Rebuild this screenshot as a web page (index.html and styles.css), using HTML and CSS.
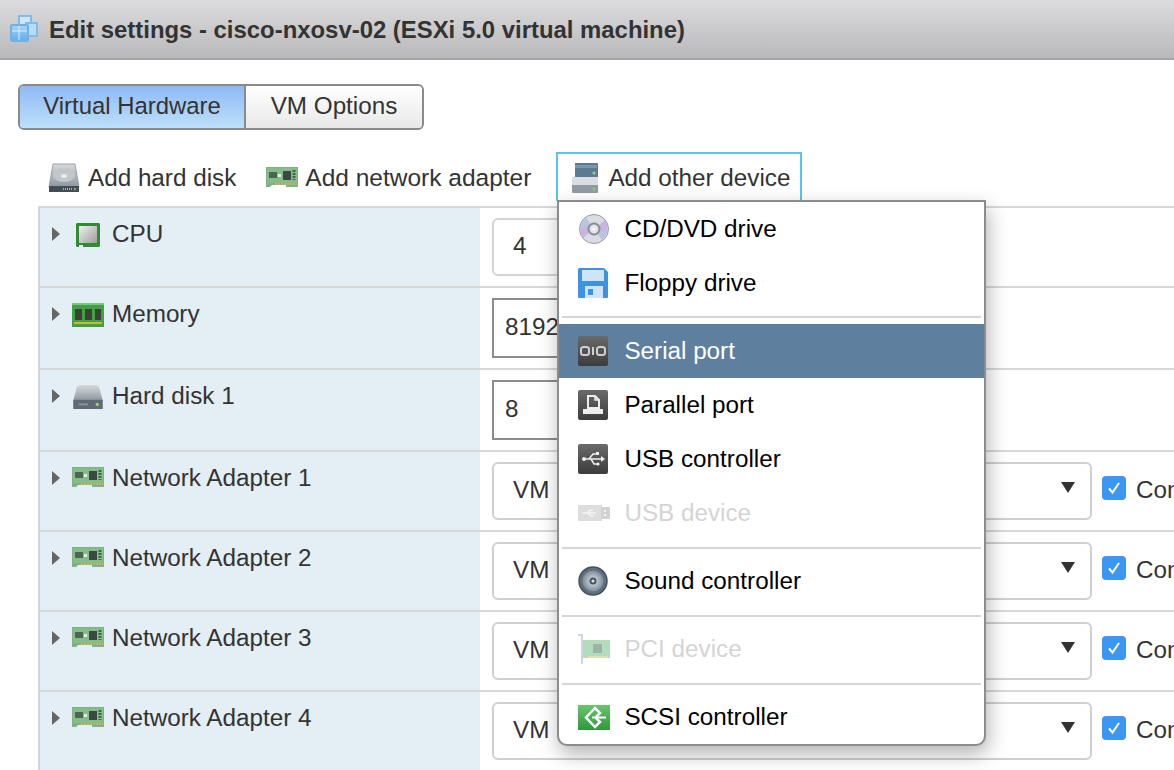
FILE: index.html
```html
<!DOCTYPE html>
<html lang="en">
<head>
  <meta charset="UTF-8" />
  <title>Edit settings - cisco-nxosv-02</title>
  <link rel="stylesheet" href="styles.css">
</head>
<body>
  <svg class="defs" width="0" height="0">
    <defs>
      <linearGradient id="g-blue" x1="0" y1="0" x2="0" y2="1"><stop offset="0" stop-color="#a9d4f5"/><stop offset="1" stop-color="#5fadee"/></linearGradient>
      <linearGradient id="g-disk" x1="0" y1="0" x2="0" y2="1"><stop offset="0" stop-color="#d6dadd"/><stop offset="1" stop-color="#8f979d"/></linearGradient>
      <linearGradient id="g-dark" x1="0" y1="0" x2="0" y2="1"><stop offset="0" stop-color="#6a6a6a"/><stop offset="1" stop-color="#3c3c3c"/></linearGradient>
      <linearGradient id="g-green" x1="0" y1="0" x2="0" y2="1"><stop offset="0" stop-color="#6cc46c"/><stop offset="1" stop-color="#2e9a3a"/></linearGradient>
      <linearGradient id="g-chip" x1="0" y1="0" x2="1" y2="1"><stop offset="0" stop-color="#f0f0f0"/><stop offset="1" stop-color="#9c9c9c"/></linearGradient>
      <radialGradient id="g-cone"><stop offset="0" stop-color="#dfe5ea"/><stop offset="1" stop-color="#7d8c99"/></radialGradient>

      <symbol id="i-nic" viewBox="0 0 32 20">
        <path d="M0 0h32v20H20v-2H6l-2 2H0z" fill="#7fb184"/>
        <path d="M1 1h30v15H1z" fill="#86bb8a"/>
        <rect x="3" y="5" width="8" height="6" fill="#4a6650"/>
        <rect x="17" y="4" width="8" height="9" fill="#3a4a42"/>
        <rect x="12" y="7" width="3" height="3" fill="#e7edd8"/>
        <path d="M28 3v10" stroke="#3d6b46" stroke-width="3" stroke-dasharray="2 1"/>
        <path d="M9 17h22" stroke="#c9b45c" stroke-width="2" stroke-dasharray="2 1"/>
      </symbol>
      <symbol id="i-disk" viewBox="0 0 32 26">
        <path d="M7 0h18q2 0 3 2l4 15H0L4 2q1-2 3-2z" fill="url(#g-disk)"/>
        <path d="M0 16h32v10H0z" fill="#5e6b76"/>
        <rect x="6" y="20" width="10" height="2" fill="#8b97a1"/>
        <circle cx="26" cy="21" r="1.8" fill="#9fd06a"/>
      </symbol>
      <symbol id="i-mem" viewBox="0 0 32 24">
        <rect width="32" height="24" fill="#3ea142"/>
        <rect width="32" height="2" fill="#7bc77d"/>
        <path d="M3 6h7v11H3zM13 6h7v11h-7zM23 6h6v11h-6z" fill="#3d4136"/>
        <path d="M2 20h28" stroke="#d3b23f" stroke-width="2"/>
      </symbol>
      <symbol id="i-cpu" viewBox="0 0 24 24">
        <path d="M0 1l1-1h22l1 1v22l-1 1H7v-2H3v2H1l-1-1z" fill="#2f8c30"/>
        <rect x="3" y="3" width="18" height="17" fill="url(#g-chip)"/>
      </symbol>
    </defs>
  </svg>

  <header class="title-bar">
    <svg class="title-icon" width="30" height="30" viewBox="0 0 30 30">
      <rect x="10" y="2" width="12" height="11" fill="#cfe6f8" stroke="#7fbcee" stroke-width="2"/>
      <rect x="17" y="9" width="11" height="13" fill="#b9dcf7" stroke="#7fbcee" stroke-width="2"/>
      <rect x="2" y="11" width="17" height="16" rx="1" fill="url(#g-blue)" stroke="#6db2ea" stroke-width="2"/>
      <path d="M3 17h15M10 12v14" stroke="#d9eeff" stroke-width="1"/>
    </svg>
    <span class="title-text">Edit settings - cisco-nxosv-02 (ESXi 5.0 virtual machine)</span>
  </header>

  <div class="tabs">
    <button class="tab tab-active">Virtual Hardware</button>
    <button class="tab">VM Options</button>
  </div>

  <div class="toolbar">
    <div class="tool tool-disk">
      <svg width="32" height="30" viewBox="0 0 32 30">
        <path d="M5 1h22l4 23H1z" fill="url(#g-disk)" stroke="#9aa0a5"/>
        <ellipse cx="16" cy="12" rx="11" ry="7" fill="#c2c7cb"/>
        <ellipse cx="16" cy="13" rx="3" ry="2" fill="#e8eaec"/>
        <rect x="1" y="23" width="30" height="6" fill="#444d55"/>
        <path d="M15 26h10" stroke="#a8b0b6" stroke-width="2" stroke-dasharray="1 1"/>
        <circle cx="27" cy="26" r="1" fill="#9fd06a"/>
      </svg>
      Add hard disk
    </div>
    <div class="tool tool-nic">
      <svg width="32" height="20"><use href="#i-nic"/></svg>
      Add network adapter
    </div>
    <div class="tool tool-other">
      <svg width="28" height="32" viewBox="0 0 28 32">
        <path d="M4 1h22a1 1 0 0 1 1 1v14H4z" fill="#5c7a92"/>
        <rect x="4" y="3" width="22" height="3" fill="#7b97ad"/>
        <circle cx="23" cy="11" r="1.5" fill="#a5d66f"/>
        <path d="M1 17h26v13a1 1 0 0 1-1 1H2a1 1 0 0 1-1-1z" fill="#8f9aa3"/>
        <rect x="1" y="15" width="26" height="8" fill="#d8dee2"/>
        <circle cx="23" cy="27" r="1.500" fill="#8fcf5f"/>
      </svg>
      Add other device

      <div class="menu">
        <div class="menu-item">
          <svg width="32" height="32" viewBox="0 0 32 32">
            <circle cx="16" cy="16" r="14.500" fill="#d9dce2" stroke="#9a9aa2"/>
            <path d="M16 16L27 7a14 14 0 0 1 2 12zM16 16L5 25a14 14 0 0 1-2-12z" fill="#c9b5e0"/>
            <path d="M16 16L24 27a14 14 0 0 0 5-8zM16 16L8 5a14 14 0 0 0-5 8z" fill="#b8c4e4"/>
            <circle cx="16" cy="16" r="5.500" fill="#e4e4ea" stroke="#8a8a94" stroke-width="2"/>
            <circle cx="16" cy="16" r="1.600" fill="#fff"/>
          </svg>
          CD/DVD drive
        </div>
        <div class="menu-item">
          <svg width="30" height="30" viewBox="0 0 30 30">
            <path d="M1 0h25l4 4v25a1 1 0 0 1-1 1H1a1 1 0 0 1-1-1V1z" fill="#3d93e2"/>
            <rect x="4" y="2" width="22" height="11" fill="#cfe4f7"/>
            <rect x="7" y="18" width="18" height="12" fill="#cfe4f7"/>
            <rect x="10" y="21" width="5" height="6" fill="#3d93e2"/>
          </svg>
          Floppy drive
        </div>
        <div class="menu-sep menu-sep-first"></div>
        <div class="menu-item menu-item-on">
          <svg width="30" height="30" viewBox="0 0 30 30">
            <rect width="30" height="30" rx="2" fill="url(#g-dark)"/>
            <rect x="3" y="11" width="8" height="8" rx="2.500" fill="none" stroke="#cfcfcf" stroke-width="2"/>
            <path d="M15 11v8" stroke="#cfcfcf" stroke-width="2"/>
            <rect x="19" y="11" width="8" height="8" rx="2.500" fill="none" stroke="#cfcfcf" stroke-width="2"/>
          </svg>
          Serial port
        </div>
        <div class="menu-item">
          <svg width="30" height="30" viewBox="0 0 30 30">
            <rect width="30" height="30" rx="2" fill="url(#g-dark)"/>
            <path d="M10 6h7l4 4v8H10z" fill="none" stroke="#eee" stroke-width="2"/>
            <path d="M17 6v4h4" fill="none" stroke="#eee" stroke-width="1.500"/>
            <rect x="5" y="19" width="20" height="5" fill="#eee"/>
          </svg>
          Parallel port
        </div>
        <div class="menu-item">
          <svg width="30" height="30" viewBox="0 0 30 30">
            <rect width="30" height="30" rx="2" fill="url(#g-dark)"/>
            <path d="M6 15h18M11 15l4-5h4M13 15l3 5h3" fill="none" stroke="#eee" stroke-width="1.500"/>
            <circle cx="6" cy="15" r="2" fill="#eee"/>
            <path d="M23 12l4 3-4 3z" fill="#eee"/>
            <rect x="18" y="8" width="3" height="3" fill="#eee"/>
            <circle cx="20" cy="20" r="1.600" fill="#eee"/>
          </svg>
          USB controller
        </div>
        <div class="menu-item menu-item-off">
          <svg width="32" height="20" viewBox="0 0 32 20">
            <path d="M0 2h24v16H0z" fill="#ddd"/>
            <path d="M23 4h9v12h-9z" fill="#d2d2d2"/>
            <path d="M4 10h14M9 10l3-3h3M10 10l3 3h3" fill="none" stroke="#f4f4f4" stroke-width="1.500"/>
            <path d="M26 7h2v2h-2zM26 11h2v2h-2z" fill="#f4f4f4"/>
          </svg>
          USB device
        </div>
        <div class="menu-sep"></div>
        <div class="menu-item">
          <svg width="30" height="30" viewBox="0 0 30 30">
            <circle cx="15" cy="15" r="14" fill="#5f6f7c" stroke="#46525c" stroke-width="1.500"/>
            <circle cx="15" cy="15" r="10.500" fill="url(#g-cone)"/>
            <circle cx="15" cy="15" r="3.500" fill="#47535e"/>
            <circle cx="15" cy="15" r="1.600" fill="#d8dee3"/>
          </svg>
          Sound controller
        </div>
        <div class="menu-sep"></div>
        <div class="menu-item menu-item-off">
          <svg width="32" height="30" viewBox="0 0 32 30">
            <path d="M0 0h5v30H3V2H0z" fill="#ccd6e0"/>
            <rect x="5" y="6" width="27" height="18" fill="#b4dcbc"/>
            <rect x="15" y="10" width="9" height="9" fill="#9fb3a5"/>
            <path d="M10 23h20" stroke="#e6e0a8" stroke-width="2"/>
          </svg>
          PCI device
        </div>
        <div class="menu-sep"></div>
        <div class="menu-item">
          <svg width="32" height="25" viewBox="0 0 32 25">
            <rect width="32" height="25" fill="url(#g-green)"/>
            <path d="M17 3l-9 9.500 9 9.500 5-5-4.500-4.500 4.500-4.500z" fill="none" stroke="#fff" stroke-width="2.500"/>
            <path d="M14 12.500h14" stroke="#fff" stroke-width="2"/>
          </svg>
          SCSI controller
        </div>
      </div>
    </div>
  </div>

  <div class="hw-table">
    <div class="hw-row">
      <div class="hw-name">
        <span class="arrow"></span>
        <svg class="icon-cpu" width="24" height="24"><use href="#i-cpu"/></svg>
        CPU
      </div>
      <div class="hw-value"><div class="field field-soft">4</div></div>
    </div>
    <div class="hw-row hw-row-tall">
      <div class="hw-name">
        <span class="arrow"></span>
        <svg class="icon-32" width="32" height="24"><use href="#i-mem"/></svg>
        Memory
      </div>
      <div class="hw-value"><div class="field field-hard">8192</div></div>
    </div>
    <div class="hw-row hw-row-tall">
      <div class="hw-name">
        <span class="arrow"></span>
        <svg class="icon-32" width="32" height="24"><use href="#i-disk"/></svg>
        Hard disk 1
      </div>
      <div class="hw-value"><div class="field field-hard">8</div></div>
    </div>
    <div class="hw-row">
      <div class="hw-name">
        <span class="arrow"></span>
        <svg class="icon-32" width="32" height="20"><use href="#i-nic"/></svg>
        Network Adapter 1
      </div>
      <div class="hw-value">
        <div class="select">VM<span class="caret"></span></div>
        <span class="check"><svg width="14" height="14" viewBox="0 0 14 14"><path d="M2 7.500l3.500 4L12 2" fill="none" stroke="#fff" stroke-width="2"/></svg></span>
        <span class="check-label">Connect</span>
      </div>
    </div>
    <div class="hw-row">
      <div class="hw-name">
        <span class="arrow"></span>
        <svg class="icon-32" width="32" height="20"><use href="#i-nic"/></svg>
        Network Adapter 2
      </div>
      <div class="hw-value">
        <div class="select">VM<span class="caret"></span></div>
        <span class="check"><svg width="14" height="14" viewBox="0 0 14 14"><path d="M2 7.500l3.500 4L12 2" fill="none" stroke="#fff" stroke-width="2"/></svg></span>
        <span class="check-label">Connect</span>
      </div>
    </div>
    <div class="hw-row">
      <div class="hw-name">
        <span class="arrow"></span>
        <svg class="icon-32" width="32" height="20"><use href="#i-nic"/></svg>
        Network Adapter 3
      </div>
      <div class="hw-value">
        <div class="select">VM<span class="caret"></span></div>
        <span class="check"><svg width="14" height="14" viewBox="0 0 14 14"><path d="M2 7.500l3.500 4L12 2" fill="none" stroke="#fff" stroke-width="2"/></svg></span>
        <span class="check-label">Connect</span>
      </div>
    </div>
    <div class="hw-row">
      <div class="hw-name">
        <span class="arrow"></span>
        <svg class="icon-32" width="32" height="20"><use href="#i-nic"/></svg>
        Network Adapter 4
      </div>
      <div class="hw-value">
        <div class="select">VM<span class="caret"></span></div>
        <span class="check"><svg width="14" height="14" viewBox="0 0 14 14"><path d="M2 7.500l3.500 4L12 2" fill="none" stroke="#fff" stroke-width="2"/></svg></span>
        <span class="check-label">Connect</span>
      </div>
    </div>
  </div>
</body>
</html>
```

FILE: styles.css
```css
/* Reset */
* {
  box-sizing: border-box;
  margin: 0;
  padding: 0;
}
html, body {
  height: 770px;
  overflow: hidden;
}
body {
  font-family: "Liberation Sans", Arial, sans-serif;
  font-size: 24.25px;
  color: #333;
  background: #fff;
}
.defs {
  display: block;
  height: 0;
}

/* Title bar */
.title-bar {
  display: flex;
  align-items: center;
  height: 60px;
  padding-left: 9px;
  gap: 10px;
  background: linear-gradient(#dcdcde, #b9b9bc);
  border-bottom: 2px solid #a6a6a8;
  font-size: 23.9px;
  font-weight: bold;
  color: #333;
}
.title-text {
  padding-top: 2px;
}

/* Tabs */
.tabs {
  display: flex;
  width: 406px;
  height: 46px;
  margin: 24px 0 0 18px;
  border: 2px solid #8a8a8a;
  border-radius: 6px;
  overflow: hidden;
}
.tab {
  flex: 1;
  padding-bottom: 2px;
  border: none;
  font: inherit;
  color: #333;
  background: linear-gradient(#fff, #e8e8e8);
}
.tab-active {
  flex: none;
  width: 226px;
  border-right: 2px solid #8a8a8a;
  font-size: 23.9px;
  background: linear-gradient(#8fb9f4, #bde0fb);
}

/* Toolbar */
.toolbar {
  display: flex;
  align-items: center;
  height: 49px;
  margin-top: 22px;
  padding-left: 48px;
}
.tool {
  display: flex;
  align-items: center;
  height: 49px;
  white-space: nowrap;
}
.tool-disk {
  gap: 8px;
  padding-top: 2px;
}
.tool-nic {
  gap: 7px;
  margin-left: 30px;
  padding-top: 2px;
  font-size: 24.5px;
}
.tool-nic svg {
  margin-top: -2px;
}
.tool-other {
  position: relative;
  gap: 9px;
  margin-left: 25px;
  padding: 0 10px 0 13px;
  border: 2px solid #55c6ee;
  border-bottom-width: 0;
}

/* Dropdown menu */
.menu {
  position: absolute;
  z-index: 5;
  top: 46px;
  left: -1px;
  width: 429px;
  height: 546px;
  background: #fff;
  border: 2px solid #8c8c8c;
  border-radius: 0 0 10px 10px;
  box-shadow: 2px 8px 20px rgba(0, 0, 0, 0.3);
  color: #000;
}
.menu-item {
  position: relative;
  display: flex;
  align-items: center;
  height: 54px;
  padding-left: 65px;
}
.menu-item svg {
  position: absolute;
  left: 19px;
}
.menu-item-on {
  background: #5f7f9f;
  color: #fff;
}
.menu-item-off {
  color: #d4d4d4;
}
.menu-sep {
  height: 2px;
  margin: 7px 3px 5px 3px;
  background: #d6d6d6;
}
.menu-sep-first {
  margin: 6px 3px 6px 3px;
}

/* Hardware table */
.hw-table {
  width: 1174px;
  margin: 5px 0 0 38px;
  border-top: 2px solid #d8d8d8;
  border-left: 2px solid #d4d4d4;
}
.hw-row {
  display: flex;
  height: 80px;
  border-bottom: 2px solid #d8d8d8;
}
.hw-row-tall {
  height: 82px;
}
.hw-name {
  display: flex;
  align-items: flex-start;
  flex: none;
  width: 440px;
  padding: 12px 0 0 12px;
  line-height: 28px;
  background: #e3eef5;
}
.hw-name svg {
  margin-top: 3px;
}
.arrow {
  flex: none;
  width: 0;
  height: 0;
  margin: 7px 12px 0 0;
  border-left: 8px solid #666;
  border-top: 7px solid transparent;
  border-bottom: 7px solid transparent;
}
.icon-32 {
  margin-right: 8px;
}
.icon-cpu {
  margin: 0 12px 0 4px;
}
.hw-value {
  display: flex;
  align-items: flex-start;
  padding: 10px 0 0 12px;
  flex: 1;
  min-width: 0;
}
.field {
  display: flex;
  align-items: center;
  flex: none;
  width: 200px;
  padding-bottom: 2px;
}
.field-soft {
  height: 58px;
  padding-left: 19px;
  border: 2px solid #d4d4d4;
  border-radius: 6px;
}
.field-hard {
  height: 60px;
  padding-left: 11px;
  border: 2px solid #8c8c8c;
}
.select {
  position: relative;
  display: flex;
  align-items: center;
  flex: none;
  width: 600px;
  height: 58px;
  padding: 0 0 2px 19px;
  border: 2px solid #cfcfcf;
  border-radius: 6px;
}
.caret {
  position: absolute;
  right: 15px;
  top: 18px;
  width: 0;
  height: 0;
  border-top: 11px solid #333;
  border-left: 7px solid transparent;
  border-right: 7px solid transparent;
}
.check {
  display: flex;
  align-items: center;
  justify-content: center;
  flex: none;
  width: 24px;
  height: 24px;
  margin: 14px 0 0 10px;
  background: #3c97f4;
  border-radius: 4px;
}
.check-label {
  margin: 14px 0 0 10px;
  white-space: nowrap;
}
```
